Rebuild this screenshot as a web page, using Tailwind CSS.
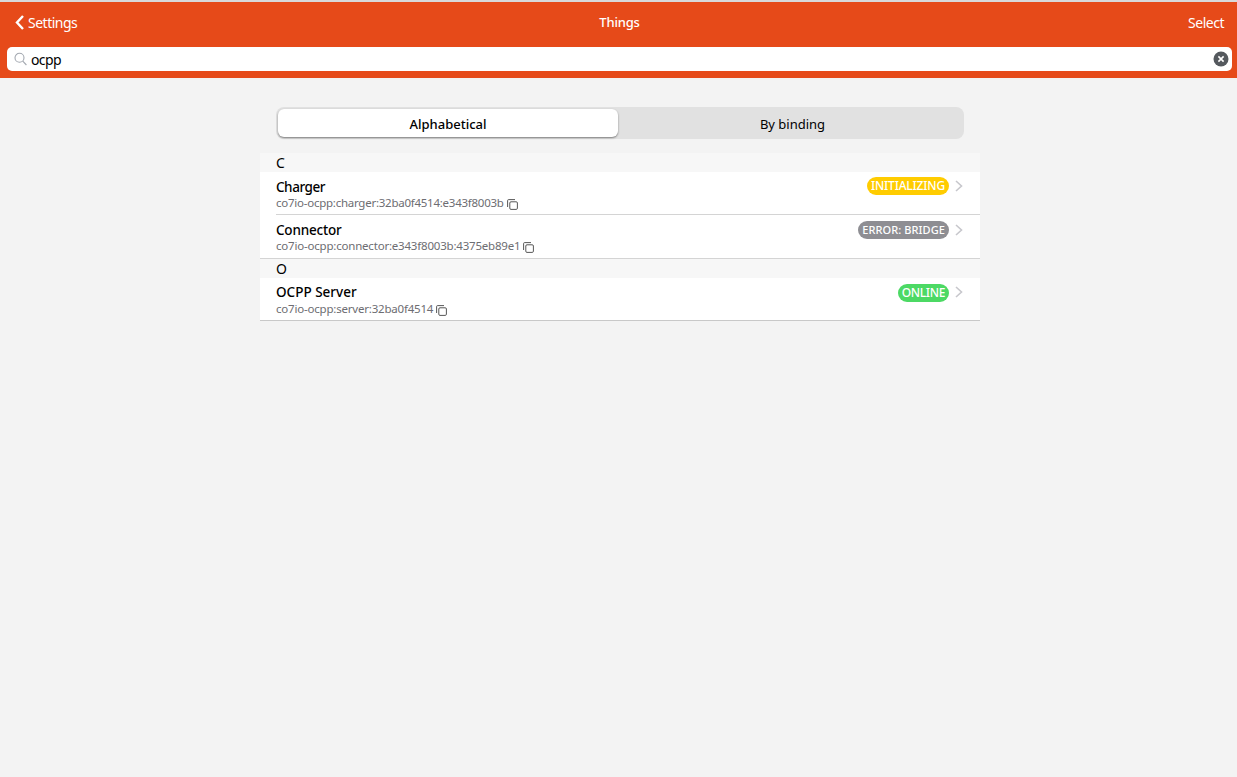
<!DOCTYPE html>
<html>
<head>
    <meta charset="UTF-8">
    <title>Things</title>
    <script src="https://cdn.jsdelivr.net/npm/@tailwindcss/browser@4"></script>
</head>
<body class="bg-[#f3f3f3] h-screen overflow-hidden font-['Noto_Sans',sans-serif] text-black">
    <!-- navbar -->
    <div class="bg-[#e64a19] border-t-2 border-[#d9d9d9] h-[78px]">
        <div class="h-[41px] flex items-center justify-between text-white text-[14px] tracking-[-0.5px] pl-[15px] pr-[13px]">
            <div class="w-[200px] flex items-center gap-[4px]">
                <svg width="9" height="15" viewBox="0 0 9 15" fill="none" stroke="white" stroke-width="2.4"><path d="M8 1 L2 7.5 L8 14"/></svg>
                <span>Settings</span>
            </div>
            <span class="font-medium text-[13px] tracking-[-0.2px]">Things</span>
            <span class="w-[200px] text-right">Select</span>
        </div>
        <div class="ml-[7px] mr-[5px] mt-[4px] h-[24px] bg-white rounded-[5px] flex items-center pl-[7px] pr-[3px]">
            <svg width="13" height="14" viewBox="0 0 13 14" fill="none" stroke="#a3a8b0" stroke-width="1.1"><circle cx="5.5" cy="5.8" r="4.5"/><path d="M8.8 9.2 L12.4 13"/></svg>
            <span class="ml-[4px] text-[14px] tracking-[-0.6px]">ocpp</span>
            <svg class="ml-auto" width="16" height="16" viewBox="0 0 16 16"><circle cx="8" cy="8" r="7.5" fill="#55595e"/><path d="M5.4 5.4 L10.6 10.6 M10.6 5.4 L5.4 10.6" stroke="white" stroke-width="1.6"/></svg>
        </div>
    </div>

    <!-- segmented control -->
    <div class="w-[688px] ml-[276px] mt-[29px] h-[32px] bg-[#e1e1e1] rounded-[8px] p-[2px] flex text-[13px]">
        <div class="w-[340px] bg-white rounded-[6px] shadow-[0_1px_2px_rgba(0,0,0,0.45)] flex items-center justify-center font-medium pt-[4px]">Alphabetical</div>
        <div class="flex-1 flex items-center justify-center pt-[4px] pl-[5px]">By binding</div>
    </div>

    <!-- list -->
    <div class="w-[720px] ml-[260px] mt-[14px]">
        <div class="h-[19px] bg-[#f7f7f7] pl-[16px] text-[14px] leading-[19px]">C</div>
        <div class="bg-white pl-[16px]">
            <div class="h-[43px] border-b border-[#d4d4d4] flex justify-between pr-[17px]">
                <div class="pt-[6px]">
                    <div class="text-[13.5px] leading-[18px] font-medium tracking-[-0.45px]">Charger</div>
                    <div class="flex items-center text-[11.5px] leading-[14px] text-[#6d6d72] tracking-[-0.25px]">co7io-ocpp:charger:32ba0f4514:e343f8003b
                        <svg class="ml-[3px] mt-[2px]" width="11" height="11" viewBox="0 0 11 11" fill="none" stroke="#444" stroke-width="0.9"><rect x="2.8" y="2.8" width="7.6" height="7.6" rx="1.2"/><path d="M0.6 8 V1.6 Q0.6 0.6 1.6 0.6 H8"/></svg>
                    </div>
                </div>
                <div class="flex items-start pt-[5px]">
                    <span class="h-[18px] px-[4px] rounded-full bg-[#ffcc00] text-white text-[12px] leading-[18px] font-medium tracking-[-0.2px]">INITIALIZING</span>
                    <svg class="ml-[6px] mt-[3px]" width="8" height="12" viewBox="0 0 8 12" fill="none" stroke="#c7c7cc" stroke-width="1.6"><path d="M1 1 L6.5 6 L1 11"/></svg>
                </div>
            </div>
            <div class="h-[43px] flex justify-between pr-[17px]">
                <div class="pt-[6px]">
                    <div class="text-[13.5px] leading-[18px] font-medium tracking-[-0.2px]">Connector</div>
                    <div class="flex items-center text-[11.5px] leading-[14px] text-[#6d6d72] tracking-[-0.2px]">co7io-ocpp:connector:e343f8003b:4375eb89e1
                        <svg class="ml-[3px] mt-[2px]" width="11" height="11" viewBox="0 0 11 11" fill="none" stroke="#444" stroke-width="0.9"><rect x="2.8" y="2.8" width="7.6" height="7.6" rx="1.2"/><path d="M0.6 8 V1.6 Q0.6 0.6 1.6 0.6 H8"/></svg>
                    </div>
                </div>
                <div class="flex items-start pt-[6px]">
                    <span class="h-[18px] px-[4px] rounded-full bg-[#8e8e93] text-white text-[11px] leading-[18px] font-medium tracking-[0.08px]">ERROR: BRIDGE</span>
                    <svg class="ml-[6px] mt-[3px]" width="8" height="12" viewBox="0 0 8 12" fill="none" stroke="#c7c7cc" stroke-width="1.6"><path d="M1 1 L6.5 6 L1 11"/></svg>
                </div>
            </div>
        </div>
        <div class="h-[20px] bg-[#f7f7f7] border-t border-[#d4d4d4] pl-[16px] text-[14px] leading-[19px]">O</div>
        <div class="bg-white h-[43px] border-b border-[#c8c8c8] pl-[16px] pr-[17px] flex justify-between">
            <div class="pt-[5px]">
                <div class="text-[13.5px] leading-[18px] font-medium">OCPP Server</div>
                <div class="flex items-center mt-[1px] text-[11.5px] leading-[14px] text-[#6d6d72] tracking-[-0.2px]">co7io-ocpp:server:32ba0f4514
                    <svg class="ml-[3px] mt-[2px]" width="11" height="11" viewBox="0 0 11 11" fill="none" stroke="#444" stroke-width="0.9"><rect x="2.8" y="2.8" width="7.6" height="7.6" rx="1.2"/><path d="M0.6 8 V1.6 Q0.6 0.6 1.6 0.6 H8"/></svg>
                </div>
            </div>
            <div class="flex items-start pt-[6px]">
                <span class="h-[18px] px-[4px] rounded-full bg-[#4cd964] text-white text-[12px] leading-[18px] font-medium tracking-[-0.35px]">ONLINE</span>
                <svg class="ml-[6px] mt-[2px]" width="8" height="12" viewBox="0 0 8 12" fill="none" stroke="#c7c7cc" stroke-width="1.6"><path d="M1 1 L6.5 6 L1 11"/></svg>
            </div>
        </div>
    </div>
</body>
</html>
